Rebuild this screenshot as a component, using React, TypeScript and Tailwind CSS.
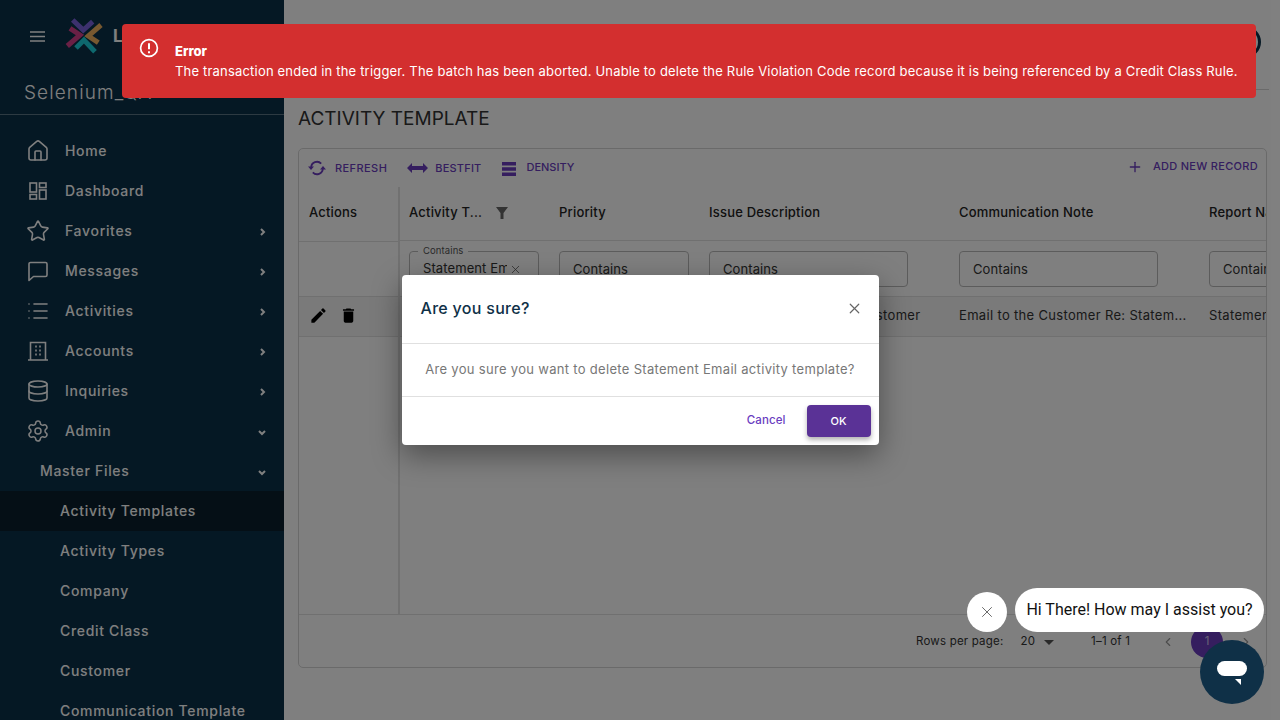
import { useState } from 'react'
import { Database, Home, List, Plus, Settings, Star, X, ChevronLeft, ChevronRight } from 'lucide-react'
import type { ReactNode } from 'react'

const FONT = "font-['Inter','Noto_Sans',sans-serif]"

function DashIcon() {
  return (
    <svg width="24" height="24" viewBox="0 0 24 24" fill="none" stroke="currentColor" strokeWidth="1.6">
      <rect x="4" y="4" width="6.5" height="9" />
      <rect x="13.5" y="4" width="6.5" height="4.5" />
      <rect x="4" y="15.5" width="6.5" height="4.5" />
      <rect x="13.5" y="11" width="6.5" height="9" />
    </svg>
  )
}

function MessageIcon() {
  return (
    <svg width="24" height="24" viewBox="0 0 24 24" fill="none" stroke="currentColor" strokeWidth="1.6" strokeLinejoin="round">
      <path d="M4.5 3.5h15a1.5 1.5 0 0 1 1.5 1.5v11a1.5 1.5 0 0 1-1.5 1.5H7.5L3 21.5V5a1.5 1.5 0 0 1 1.5-1.5z" />
    </svg>
  )
}

function BuildingIcon() {
  return (
    <svg width="24" height="24" viewBox="0 0 24 24" fill="none" stroke="currentColor" strokeWidth="1.6">
      <path d="M2 21h20M4.5 21V3.5h15V21" />
      <path d="M9.2 7.5h1.6M13.2 7.5h1.6M9.2 11.5h1.6M13.2 11.5h1.6M9.2 15.5h1.6M13.2 15.5h1.6" strokeWidth="1.8" />
    </svg>
  )
}

function SyncIcon() {
  return (
    <svg width="18" height="16" viewBox="0 0 18 16" fill="none" stroke="currentColor" strokeWidth="1.8" className="-ml-[1px]">
      <path d="M3.2 7.5A5.8 5.8 0 0 1 13.2 3.6" />
      <path d="M14.8 8.5A5.8 5.8 0 0 1 4.8 12.4" />
      <path d="M0 6.6h6L3 10z" fill="currentColor" stroke="none" />
      <path d="M12 9.4h6L15 6z" fill="currentColor" stroke="none" />
    </svg>
  )
}

const NAV = [
  { label: 'Home', icon: <Home size={24} strokeWidth={1.6} /> },
  { label: 'Dashboard', icon: <DashIcon /> },
  { label: 'Favorites', icon: <Star size={24} strokeWidth={1.6} />, arrow: 'right' },
  { label: 'Messages', icon: <MessageIcon />, arrow: 'right' },
  { label: 'Activities', icon: <List size={24} strokeWidth={1.6} />, arrow: 'right' },
  { label: 'Accounts', icon: <BuildingIcon />, arrow: 'right' },
  { label: 'Inquiries', icon: <Database size={24} strokeWidth={1.6} />, arrow: 'right' },
  { label: 'Admin', icon: <Settings size={26} strokeWidth={1.5} />, arrow: 'down' },
]

const SUB = ['Activity Templates', 'Activity Types', 'Company', 'Credit Class', 'Customer', 'Communication Template']

const COLS = [
  { title: 'Priority', w: 'w-[150px]', input: 'w-[130px]', cell: '' },
  { title: 'Issue Description', w: 'w-[250px]', input: 'w-[199px]', cell: 'Statement Email to the Customer' },
  { title: 'Communication Note', w: 'w-[250px]', input: 'w-[199px]', cell: 'Email to the Customer Re: Statem...' },
  { title: 'Report Name', w: 'w-[150px]', input: 'w-[130px]', cell: 'Statement' },
]

function Logo() {
  return (
    <svg width="40" height="40" viewBox="0 0 40 40" fill="none" strokeWidth="5">
      <path d="M8.7 4 L19.3 14 L28.7 5.7" stroke="#7a62dc" />
      <path d="M37 9 L24.3 20 L34.3 26.7" stroke="#eeb060" />
      <path d="M12 32 L20 24 L31 35.7" stroke="#1cd0dc" />
      <path d="M6 12.3 L16 19 L3.3 30" stroke="#d4408a" />
    </svg>
  )
}

function NavArrow({ dir }: { dir?: string }) {
  if (dir === 'right')
    return (
      <svg width="6" height="8" viewBox="0 0 6 8" fill="none" stroke="currentColor" strokeWidth="2" className="mr-[18px] mt-[3px]">
        <path d="M1 1l3 3-3 3" />
      </svg>
    )
  if (dir === 'down')
    return (
      <svg width="8" height="6" viewBox="0 0 8 6" fill="none" stroke="currentColor" strokeWidth="2" className="mr-[18px] mt-[4px]">
        <path d="M1 1l3 3 3-3" />
      </svg>
    )
  return null
}

function Sidebar() {
  return (
    <aside className="w-[284px] h-full shrink-0 bg-[#0a3048] text-white overflow-hidden flex flex-col">
      <div className="h-[72px] flex items-center pl-[30px] shrink-0">
        <svg width="15" height="11" viewBox="0 0 15 11" fill="none" stroke="white" strokeWidth="1.3"><path d="M0 1h15M0 5.5h15M0 10h15" /></svg>
        <div className="ml-[19px]"><Logo /></div>
        <span className="ml-[9px] text-[17px] leading-none font-bold">LOGO</span>
      </div>
      <div className="h-[43px] pl-[24px] border-b border-[#ffffff55] text-[19px] font-light tracking-[1.1px] leading-[42px] shrink-0">Selenium_QA</div>
      <nav className="pt-[16px] text-[14px] font-medium tracking-[0.68px]">
        {NAV.map(n => (
          <div key={n.label} className="h-[40px] pb-[1px] flex items-center">
            <span className="w-[24px] ml-[26px] mr-[15px] flex items-center justify-center">{n.icon}</span>
            <span className="flex-1">{n.label}</span>
            <NavArrow dir={n.arrow} />
          </div>
        ))}
        <div className="h-[40px] pb-[1px] flex items-center pl-[40px]">
          <span className="flex-1">Master Files</span>
          <NavArrow dir="down" />
        </div>
        {SUB.map(s => (
          <div key={s} className={`h-[40px] pb-[1px] flex items-center pl-[60px] ${s === 'Activity Templates' ? 'bg-[#0a1f2c]' : ''}`}>{s}</div>
        ))}
      </nav>
    </aside>
  )
}

function FilterBox({ className, value }: { className: string; value: string }) {
  return (
    <div className={`relative h-[36px] rounded-[4px] border border-[#b9b9b9] flex items-center pl-[13px] pt-[1px] text-[13px] tracking-[0.1px] text-[#333] ${className}`}>
      {value}
    </div>
  )
}

function ToolButton({ icon, label, gap, tracking, className }: { icon: ReactNode; label: string; gap: string; tracking: string; className?: string }) {
  return (
    <span className={`flex items-center ${gap} ${tracking} text-[11px] font-medium text-[#6a3cbf] ${className ?? ''}`}>
      {icon}
      {label}
    </span>
  )
}

function ActivityTable() {
  return (
    <div className="flex-1 mx-[14px] mr-[13px] mb-[52px] border border-[#d5d5d5] rounded-[5px] flex flex-col overflow-hidden">
      <div className="h-[38px] shrink-0 flex items-center pl-[10px] pr-[8px]">
        <ToolButton gap="gap-[9px]" tracking="tracking-[0.42px]" icon={<SyncIcon />} label="REFRESH" />
        <ToolButton
          className="ml-[20px]"
          gap="gap-[7px]"
          tracking="tracking-[0.2px]"
          icon={<svg width="21" height="10" viewBox="0 0 21 10" fill="currentColor"><path d="M0 5l5-5v3h11V0l5 5-5 5V7H5v3z" /></svg>}
          label="BESTFIT"
        />
        <ToolButton
          className="ml-[21px] -mt-[1px]"
          gap="gap-[10px]"
          tracking="tracking-[0px]"
          icon={<svg width="14" height="14" viewBox="0 0 14 14" fill="currentColor" className="mt-[2px]"><path d="M0 0h14v3.4H0zM0 5.3h14v3.4H0zM0 10.6h14V14H0z" /></svg>}
          label="DENSITY"
        />
        <ToolButton className="ml-auto -mt-[3px]" gap="gap-[10px]" tracking="tracking-[0.3px]" icon={<Plus size={16} strokeWidth={2} />} label="ADD NEW RECORD" />
      </div>

      <div className="flex-1 flex min-h-0">
        <div className="w-[101px] shrink-0 border-r-2 border-[#e3e3e3] flex flex-col">
          <div className="h-[55px] pb-[2px] border-b border-[#e0e0e0] flex items-center pl-[10px] text-[13px] font-medium tracking-[0.15px] text-[#222]">Actions</div>
          <div className="h-[55px] border-b border-[#e0e0e0]" />
          <div className="h-[40px] border-b border-[#e0e0e0] bg-[#f4f4f4] flex items-center pl-[10px] gap-[11px] text-black pb-[2px]">
            <svg width="19" height="19" viewBox="0 0 24 24" fill="currentColor"><path d="M3 17.25V21h3.75L17.81 9.94l-3.75-3.75L3 17.25zM20.71 7.04a1 1 0 0 0 0-1.41l-2.34-2.34a1 1 0 0 0-1.41 0l-1.83 1.83 3.75 3.75 1.83-1.83z" /></svg>
            <svg width="19" height="19" viewBox="0 0 24 24" fill="currentColor"><path d="M6 19c0 1.1.9 2 2 2h8c1.1 0 2-.9 2-2V7H6v12zM19 4h-3.5l-1-1h-5l-1 1H5v2h14V4z" /></svg>
          </div>
        </div>

        <div className="flex-1 overflow-hidden flex flex-col">
          <div className="h-[54px] shrink-0 flex items-center pb-[2px] border-b border-[#e0e0e0] text-[13px] font-medium tracking-[0.2px] text-[#222] whitespace-nowrap">
            <div className="w-[150px] shrink-0 pl-[9px] flex items-center">
              <span className="w-[87px]">Activity T...</span>
              <svg width="12" height="12" viewBox="0 0 12 12" fill="#666"><path d="M0 0h12L7.5 6v6h-3V6z" /></svg>
            </div>
            {COLS.map(c => <div key={c.title} className={`${c.w} shrink-0 pl-[9px]`}>{c.title}</div>)}
          </div>
          <div className="h-[56px] shrink-0 flex items-center pt-[1px] border-b border-[#e0e0e0] whitespace-nowrap">
            <div className="w-[150px] shrink-0 pl-[9px]">
              <div className="relative h-[36px] w-[130px] rounded-[4px] border border-[#b9b9b9] flex items-center pl-[13px] text-[13px] tracking-[0.1px] text-[#333]">
                <span className="absolute -top-[7px] left-[8px] bg-white px-[5px] text-[9.5px] leading-[12px] text-[#555]">Contains</span>
                <span className="w-[84px] overflow-hidden">Statement Email</span>
                <X size={13} strokeWidth={1.4} className="ml-[2px] text-[#555]" />
              </div>
            </div>
            {COLS.map(c => (
              <div key={c.title} className={`${c.w} shrink-0 pl-[9px]`}>
                <FilterBox className={c.input} value="Contains" />
              </div>
            ))}
          </div>
          <div className="h-[40px] shrink-0 flex items-center pb-[2px] border-b border-[#e0e0e0] bg-[#f4f4f4] text-[13px] tracking-[0.33px] text-[#333] whitespace-nowrap">
            <div className="w-[150px] shrink-0 pl-[9px]">Statement Email</div>
            {COLS.map(c => <div key={c.title} className={`${c.w} shrink-0 pl-[9px]`}>{c.cell}</div>)}
          </div>
        </div>
      </div>

      <div className="h-[53px] pt-[2px] shrink-0 border-t border-[#e0e0e0] flex items-center text-[11.5px] tracking-[0.2px] text-[#333]">
        <span className="ml-[617px]">Rows per page:</span>
        <span className="ml-[17px]">20</span>
        <svg width="10" height="5" viewBox="0 0 10 5" fill="#555" className="ml-[9px]"><path d="M0 0h10L5 5z" /></svg>
        <span className="ml-[37px]">1–1 of 1</span>
        <ChevronLeft size={14} className="ml-[31px] text-[#999]" />
        <span className="ml-[16px] w-[32px] h-[32px] rounded-full bg-[#6a3cbf] text-white/70 flex items-center justify-center">1</span>
        <ChevronRight size={14} className="ml-[16px] text-[#999]" />
      </div>
    </div>
  )
}

export default function App() {
  const [open] = useState(true)

  return (
    <div className={`relative w-[1280px] h-[720px] overflow-hidden flex bg-white ${FONT}`}>
      <Sidebar />
      <main className="flex-1 flex flex-col min-w-0">
        <header className="h-[90px] shrink-0 mr-[11px] border-b border-[#d5d5d5] flex justify-end items-center pr-[8px]">
          <span className="w-[32px] h-[32px] rounded-full border-[3px] border-[#0a3048] -mt-[6px]" />
        </header>
        <h1 className="h-[58px] shrink-0 pl-[14px] pt-[17px] text-[19px] leading-[24px] text-[#333]">ACTIVITY TEMPLATE</h1>
        <ActivityTable />
      </main>

      {open && <div className="absolute inset-0 bg-black/50" />}

      <div className="absolute top-[24px] left-[122px] w-[1134px] h-[74px] rounded-[4px] bg-[#d32f2f] text-white flex pl-[17px] pt-[14px]">
        <svg width="20" height="20" viewBox="0 0 20 20" fill="none" stroke="white" strokeWidth="1.7">
          <circle cx="10" cy="10" r="8.4" />
          <path d="M10 5.2v6" strokeWidth="2" />
          <path d="M10 13.2v2" strokeWidth="2" />
        </svg>
        <div className="ml-[16px] pt-[5px]">
          <div className="text-[13px] leading-[16px] font-extrabold">Error</div>
          <div className="mt-[3px] text-[13px] leading-[18px] tracking-[0.19px] whitespace-nowrap">
            The transaction ended in the trigger. The batch has been aborted. Unable to delete the Rule Violation Code record because it is being referenced by a Credit Class Rule.
          </div>
        </div>
      </div>

      <div className="absolute inset-0 flex items-center justify-center">
        <div className="w-[477px] h-[170px] bg-white rounded-[4px] shadow-[0_10px_30px_rgba(0,0,0,0.4)] flex flex-col">
          <div className="h-[69px] pb-[2px] border-b border-[#e0e0e0] flex items-center justify-between pl-[19px] pr-[16px]">
            <span className="text-[16px] font-medium tracking-[0.3px] text-[#0f3047]">Are you sure?</span>
            <X size={17} strokeWidth={1.7} className="text-[#666]" />
          </div>
          <div className="h-[53px] border-b border-[#e0e0e0] flex items-center justify-center text-[13px] tracking-[0.31px] text-[#777]">
            Are you sure you want to delete Statement Email activity template?
          </div>
          <div className="flex-1 flex items-center justify-end pr-[8px]">
            <span className="text-[11.5px] font-medium tracking-[0.1px] text-[#6a3cbf] mr-[21px]">Cancel</span>
            <span className="w-[64px] h-[32px] rounded-[4px] bg-[#5a3296] text-white text-[11px] font-medium flex items-center justify-center shadow-[0_3px_5px_rgba(0,0,0,0.3)]">OK</span>
          </div>
        </div>
      </div>

      <div className="absolute top-[588px] left-[967px] flex items-start gap-[8px] font-['Roboto',sans-serif]">
        <span className="mt-[4px] w-[40px] h-[40px] rounded-full bg-white flex items-center justify-center text-[#222]">
          <X size={18} strokeWidth={0.9} />
        </span>
        <span className="w-[249px] h-[44px] rounded-[22px] bg-white text-[16px] text-[#111] flex items-center justify-center whitespace-nowrap">Hi There! How may I assist you?</span>
      </div>
      <div className="absolute top-[640px] left-[1200px] w-[64px] h-[64px] rounded-full bg-[#0f3047] flex items-center justify-center">
        <svg width="30" height="24" viewBox="0 0 30 24" fill="white" className="mt-[1px]"><rect x="0" y="0" width="30" height="15" rx="7.5" /><path d="M18 18h6v6z" /></svg>
      </div>
    </div>
  )
}
